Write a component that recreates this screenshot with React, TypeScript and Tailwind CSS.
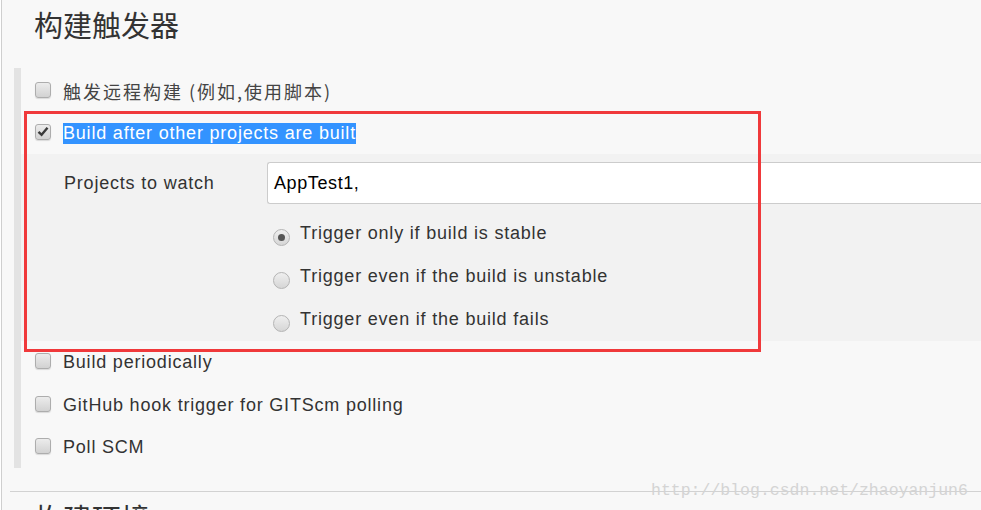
import React from 'react';

const cjk = { fontFamily: '"Noto Sans CJK SC", "Noto Sans", sans-serif' };
const sans = { fontFamily: '"Liberation Sans", Arial, sans-serif' };

function Checkbox({ checked = false }: { checked?: boolean }) {
  return (
    <span className="flex h-[16px] w-[16px] shrink-0 -translate-y-[2px] items-center justify-center rounded-[3px] border border-[#adadad] bg-linear-to-b from-[#ececec] to-[#d2d2d2] shadow-[0_1px_1px_rgba(0,0,0,0.12)]">
      {checked && (
        <svg width="12" height="11" viewBox="0 0 12 11">
          <path d="M1.5 5.8 L4.6 8.8 L10.5 1.8" fill="none" stroke="#3a3a3a" strokeWidth="2.4" />
        </svg>
      )}
    </span>
  );
}

function Radio({ checked = false }: { checked?: boolean }) {
  return (
    <span className="flex h-[17px] w-[17px] shrink-0 translate-y-[4px] items-center justify-center rounded-full border border-[#b4b4b4] bg-linear-to-b from-[#efefef] to-[#d6d6d6]">
      {checked && <span className="h-[7px] w-[7px] rounded-full bg-[#555]" />}
    </span>
  );
}

function CheckRow({ label, checked, h = 'h-[43px]' }: { label: string; checked?: boolean; h?: string }) {
  return (
    <div className={`flex ${h} items-center pl-[14px]`}>
      <Checkbox checked={checked} />
      <span className="ml-[12px] text-[18px] leading-[21px] tracking-[0.8px] text-[#333]" style={sans}>
        {label}
      </span>
    </div>
  );
}

function RadioRow({ label, checked }: { label: string; checked?: boolean }) {
  return (
    <div className="flex h-[43px] items-center pl-[252px]">
      <Radio checked={checked} />
      <span className="ml-[10px] text-[18px] tracking-[0.8px] text-[#333]" style={sans}>
        {label}
      </span>
    </div>
  );
}

export default function App() {
  return (
    <div className="relative ml-[1px] h-[510px] w-[980px] overflow-hidden border-l border-[#cfcfcf] bg-[#f8f8f8]">
      {/* Section title */}
      <h1 className="pl-[32px] pt-[10px] text-[29px] leading-[29px] text-[#333]" style={cjk}>
        构建触发器
      </h1>

      {/* Trigger options */}
      <div className="ml-[12px] mt-[29px] border-l-[7px] border-[#e3e3e3] pt-[2px]">
        <div className="flex h-[43px] items-center pl-[14px]">
          <Checkbox />
          <span className="ml-[12px] text-[18px] tracking-[2px] text-[#444]" style={cjk}>
            触发远程构建 (例如,使用脚本)
          </span>
        </div>

        <div className="flex h-[41px] items-center pl-[14px]">
          <Checkbox checked />
          <span className="ml-[12px] bg-[#3393ff] text-[18px] leading-[21px] tracking-[0.8px] text-white" style={sans}>
            Build after other projects are built
          </span>
        </div>

        {/* Nested config */}
        <div className="bg-[#f2f2f2] pt-[8px]">
          <div className="flex items-center">
            <span className="w-[246px] shrink-0 pl-[43px] text-[18px] tracking-[0.8px] text-[#333]" style={sans}>
              Projects to watch
            </span>
            <div className="flex h-[42px] flex-1 items-center rounded-l-[3px] border border-r-0 border-[#cccccc] bg-white px-[6px]">
              <span className="text-[18px] tracking-[0.6px] text-black" style={sans}>
                AppTest1,
              </span>
            </div>
          </div>
          <div className="pt-[8px]">
            <RadioRow label="Trigger only if build is stable" checked />
            <RadioRow label="Trigger even if the build is unstable" />
            <RadioRow label="Trigger even if the build fails" />
          </div>
        </div>

        <CheckRow label="Build periodically" />
        <CheckRow label="GitHub hook trigger for GITScm polling" />
        <CheckRow label="Poll SCM" h="h-[41px]" />
      </div>

      <div className="ml-[8px] mt-[23px] h-px bg-[#d2d2d2]" />

      <h2 className="pl-[32px] pt-[11px] text-[29px] leading-[29px] text-[#333]" style={cjk}>
        构建环境
      </h2>

      {/* annotation box */}
      <div className="absolute left-[22px] top-[111px] h-[241px] w-[737px] border-[3px] border-[#f0393b]" />

      {/* watermark */}
      <div
        className="absolute left-[649px] top-[481px] text-[16.5px] leading-[20px] text-[#d4d4d4]"
        style={{ fontFamily: '"Liberation Mono", monospace' }}
      >
        http://blog.csdn.net/zhaoyanjun6
      </div>
    </div>
  );
}
